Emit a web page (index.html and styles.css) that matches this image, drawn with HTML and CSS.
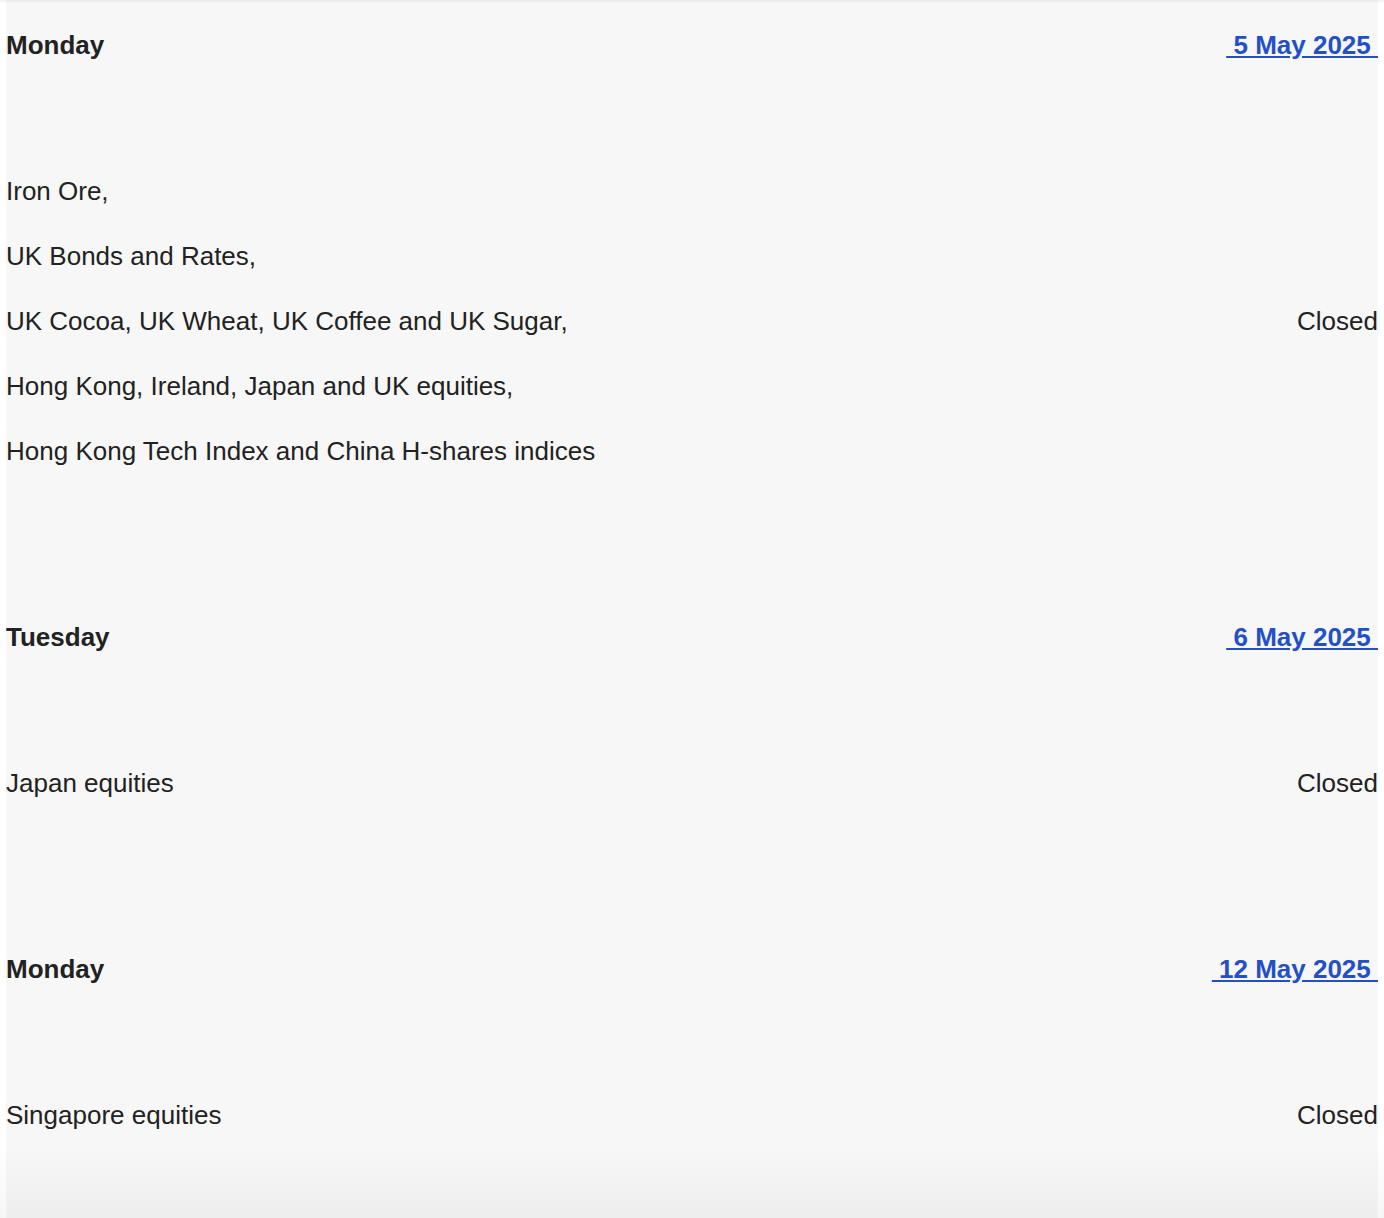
FILE: index.html
```html
<!DOCTYPE html>
<html lang="en">
<head>
<meta charset="utf-8">
<title>Market holidays</title>
<link rel="stylesheet" href="styles.css">
</head>
<body>
<div class="top-shade"></div>
<main class="schedule">
  <section class="day">
    <div class="day-head">
      <span class="weekday">Monday</span>
      <a class="date" href="#">&nbsp;5 May 2025&nbsp;</a>
    </div>
    <div class="day-body">
      <div class="markets">
        <p>Iron Ore,</p>
        <p>UK Bonds and Rates,</p>
        <p>UK Cocoa, UK Wheat, UK Coffee and UK Sugar,</p>
        <p>Hong Kong, Ireland, Japan and UK equities,</p>
        <p>Hong Kong Tech Index and China H-shares indices</p>
      </div>
      <span class="status">Closed</span>
    </div>
  </section>
  <section class="day">
    <div class="day-head">
      <span class="weekday">Tuesday</span>
      <a class="date" href="#">&nbsp;6 May 2025&nbsp;</a>
    </div>
    <div class="day-body">
      <div class="markets">
        <p>Japan equities</p>
      </div>
      <span class="status">Closed</span>
    </div>
  </section>
  <section class="day">
    <div class="day-head">
      <span class="weekday">Monday</span>
      <a class="date" href="#">&nbsp;12 May 2025&nbsp;</a>
    </div>
    <div class="day-body">
      <div class="markets">
        <p>Singapore equities</p>
      </div>
      <span class="status">Closed</span>
    </div>
  </section>
</main>
<div class="bottom-shade"></div>
</body>
</html>
```
FILE: styles.css
```css
html, body {
  margin: 0;
  padding: 0;
  background: #ffffff;
}

body {
  font-family: "Liberation Sans", Arial, sans-serif;
  font-size: 26px;
  color: #222222;
}

.schedule {
  margin: 0 6px;
  background: #f7f7f7;
  padding-bottom: 200px;
}

.day-head {
  display: flex;
  justify-content: space-between;
  align-items: center;
  height: 90px;
  line-height: 39px;
}

.weekday {
  font-weight: bold;
}

.date {
  font-weight: bold;
  color: #2350c8;
  text-decoration: underline;
}

.day-body {
  display: flex;
  justify-content: space-between;
  align-items: center;
  padding: 82px 0 121px;
  line-height: 39px;
}

.markets {
  display: flex;
  flex-direction: column;
  gap: 26px;
}

.markets p {
  margin: 0;
}

.top-shade {
  position: fixed;
  top: 0;
  left: 0;
  right: 0;
  height: 3px;
  background: linear-gradient(to bottom, rgba(0,0,0,0.06), rgba(0,0,0,0));
  z-index: 2;
}

.bottom-shade {
  position: fixed;
  left: 0;
  right: 0;
  bottom: 0;
  height: 70px;
  background: linear-gradient(to bottom, rgba(0,0,0,0), rgba(0,0,0,0.035));
  z-index: 2;
}
```
